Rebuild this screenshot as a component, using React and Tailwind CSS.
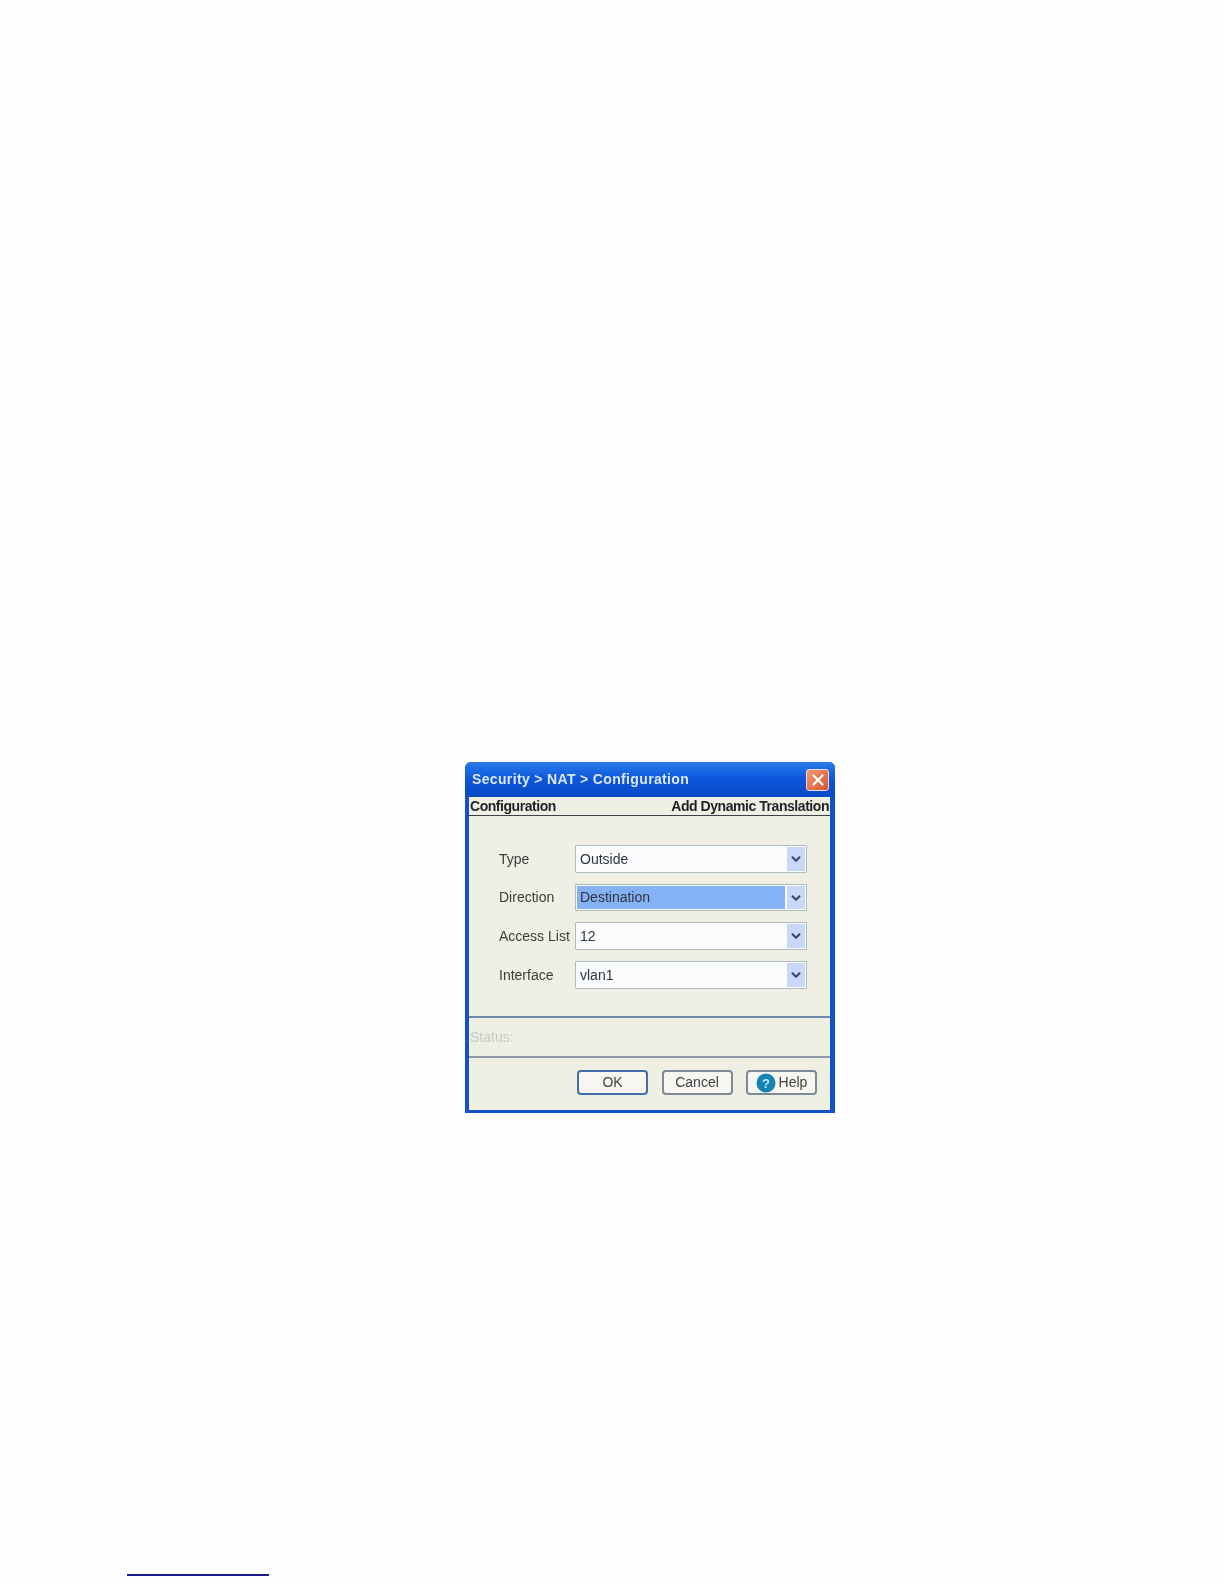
import { ChevronDown, X } from "lucide-react"

const fields = [
  { label: "Type", value: "Outside", h: "h-[28px]" },
  { label: "Direction", value: "Destination", active: true, h: "h-[27px]" },
  { label: "Access List", value: "12", h: "h-[28px]" },
  { label: "Interface", value: "vlan1", h: "h-[28px]" },
]

function Field({ label, value, active, h }) {
  return (
    <div className="flex items-center">
      <div className="w-[76px] text-[14px] text-[#3a3e3c] whitespace-nowrap">{label}</div>
      <div className={`w-[232px] ${h} flex border border-[#aebcc2] bg-[#fbfcfd] p-[1px] rounded-[1px]`}>
        <div className={`flex-1 flex items-center pl-[3px] text-[14px] text-[#2f353c] ${active ? "bg-[#85b2f5] mr-[2px]" : ""}`}>
          {value}
        </div>
        <div className="w-[18px] flex items-center justify-center bg-[#c9d8f6]">
          <ChevronDown className="w-[14px] h-[14px] text-[#34496e]" strokeWidth={3.5} />
        </div>
      </div>
    </div>
  )
}

function Button({ children, primary }) {
  return (
    <button
      className={`h-[25px] w-[71px] flex items-center justify-center gap-[3px] rounded-[4px] bg-[#f7f6f0] text-[14px] text-[#3f4346] border-2 ${
        primary ? "border-[#3f6fa8]" : "border-[#7b8a94]"
      }`}
    >
      {children}
    </button>
  )
}

export default function App() {
  return (
    <div className="min-h-[1584px] bg-[#fefefe] pt-[762px] font-['Liberation_Sans',Arial,sans-serif]">
      <div className="ml-[465px] w-[370px] h-[351px] flex flex-col rounded-t-[6px] bg-[#1450cc] blur-[0.7px]">
        <div className="h-[35px] flex items-center justify-between pl-[7px] pr-[6px] rounded-t-[6px] bg-gradient-to-b from-[#2a7bea] via-[#0c55dc] to-[#0a49c4]">
          <span className="text-[14px] font-bold tracking-[0.35px] text-[#d9e8fb]">Security &gt; NAT &gt; Configuration</span>
          <div className="w-[23px] h-[22px] flex items-center justify-center rounded-[3px] border border-[#e8dcd4] bg-gradient-to-br from-[#ee9a78] to-[#d8502a]">
            <X className="w-[18px] h-[18px] text-white" strokeWidth={3} />
          </div>
        </div>
        <div className="flex-1 flex flex-col bg-[#f0efe4] ml-[4px] mr-[5px] mb-[3px]">
          <div className="h-[19px] flex items-center justify-between px-[1px] border-b border-[#3c4048] text-[14px] font-bold tracking-[-0.45px] text-[#1e2226]">
            <span>Configuration</span>
            <span>Add Dynamic Translation</span>
          </div>
          <div className="h-[202px] flex flex-col gap-[11px] pt-[29px] pl-[30px] border-b-2 border-[#6f88ab]">
            {fields.map((f) => (
              <Field key={f.label} {...f} />
            ))}
          </div>
          <div className="h-[40px] flex items-center pl-[1px] text-[14px] text-[#c9c9c4] border-b-2 border-[#8f99a8]">
            Status:
          </div>
          <div className="flex-1 flex items-start gap-[13.5px] pt-[12px] pl-[108px]">
            <Button primary>OK</Button>
            <Button>Cancel</Button>
            <Button>
              <svg viewBox="0 0 20 20" className="w-[20px] h-[20px]">
                <circle cx="10" cy="10" r="9.5" fill="#1583b4" />
                <text x="10" y="14.5" textAnchor="middle" fontSize="13" fontWeight="700" fill="#c8eaf6">?</text>
              </svg>
              Help
            </Button>
          </div>
        </div>
      </div>
      <div className="ml-[127px] mt-[461px] w-[142px] h-[2px] bg-[#1a1a8c]" />
    </div>
  )
}
